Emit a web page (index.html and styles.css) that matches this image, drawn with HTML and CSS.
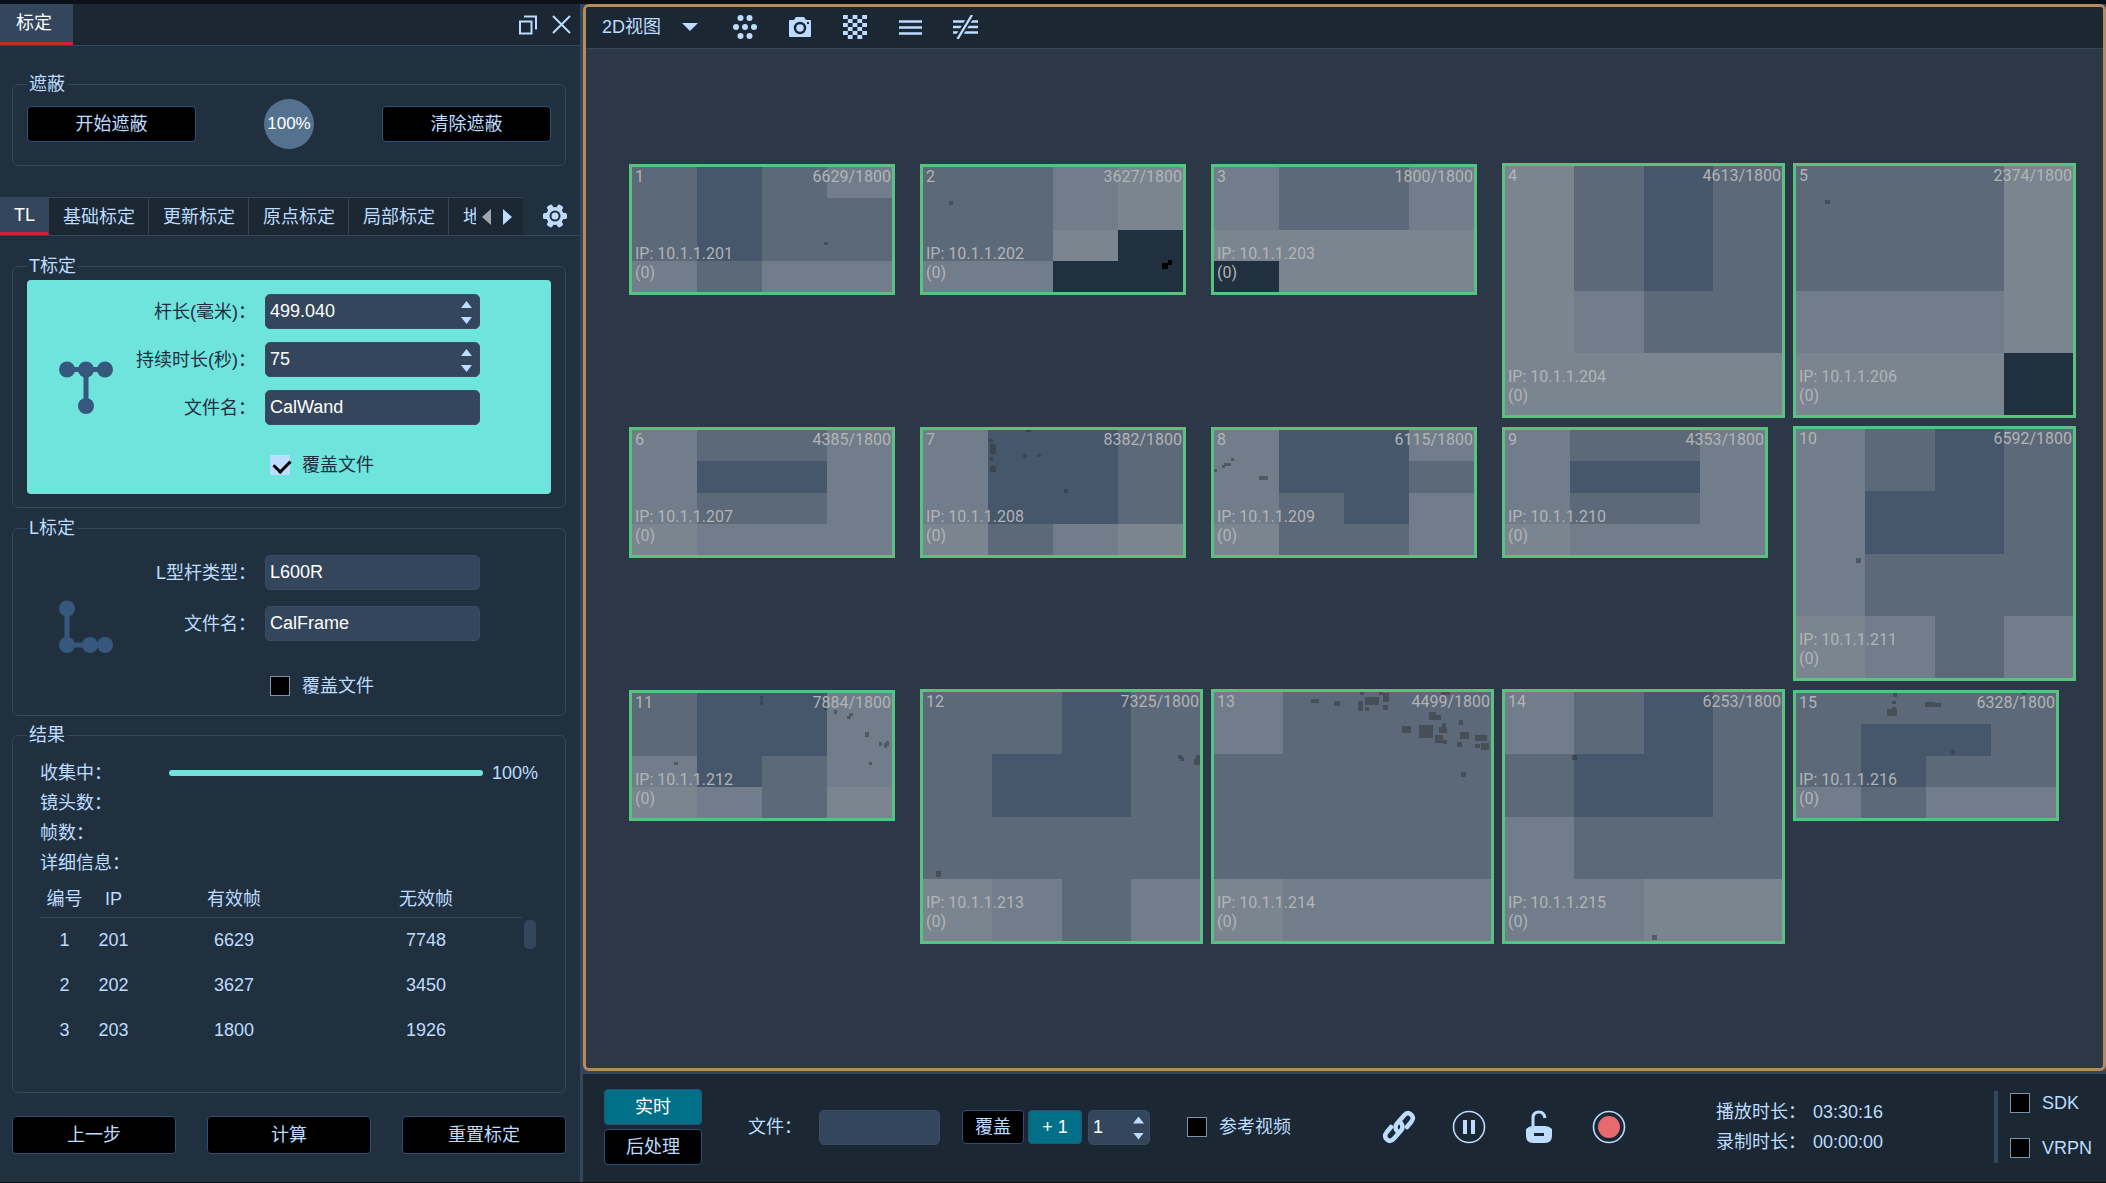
FILE: index.html
```html
<!DOCTYPE html>
<html lang="zh-CN">
<head>
<meta charset="utf-8">
<title>标定</title>
<link rel="stylesheet" href="styles.css">
</head>
<body>
<div class="app">
  <aside class="panel">
    <header class="panel-head">
      <h1 class="panel-title">标定</h1>
      <div class="window-tools">
        <button class="icon-btn" aria-label="浮动"><svg width="18" height="20" viewBox="0 0 18 20"><path d="M1 6.500h11.500v12H1z" fill="none" stroke="#bddcff" stroke-width="2"/><path d="M5 1.500h12v13" fill="none" stroke="#bddcff" stroke-width="2"/></svg></button>
        <button class="icon-btn" aria-label="关闭"><svg width="19" height="19" viewBox="0 0 19 19"><path d="M1 1l17 17M18 1L1 18" stroke="#bddcff" stroke-width="2"/></svg></button>
      </div>
    </header>

    <fieldset class="group mask-group">
      <legend>遮蔽</legend>
      <div class="mask-row">
        <button class="btn mask-btn">开始遮蔽</button>
        <span class="mask-progress">100%</span>
        <button class="btn mask-btn">清除遮蔽</button>
      </div>
    </fieldset>

    <nav class="tabs">
      <div class="tab-list">
        <button class="tab tab-active">TL</button>
        <button class="tab">基础标定</button>
        <button class="tab">更新标定</button>
        <button class="tab">原点标定</button>
        <button class="tab">局部标定</button>
        <button class="tab tab-cut">地</button>
        <button class="tab-scroll" aria-label="向左"><svg width="9" height="16" viewBox="0 0 9 16"><path d="M9 0v16L0 8z" fill="#a3a6aa"/></svg></button>
        <button class="tab-scroll" aria-label="向右"><svg width="9" height="16" viewBox="0 0 9 16"><path d="M0 0v16l9-8z" fill="#bddcff"/></svg></button>
      </div>
      <button class="icon-btn gear" aria-label="设置"><svg width="24" height="24" viewBox="0 0 24 24"><g fill="#bddcff"><circle cx="12" cy="12" r="9"/><rect x="9" y="0" width="6" height="24" rx="1.500" transform="rotate(30 12 12)"/><rect x="9" y="0" width="6" height="24" rx="1.500" transform="rotate(90 12 12)"/><rect x="9" y="0" width="6" height="24" rx="1.500" transform="rotate(150 12 12)"/></g><circle cx="12" cy="12" r="5.500" fill="#21303f"/><circle cx="12" cy="12" r="3.500" fill="#bddcff"/></svg></button>
    </nav>

    <fieldset class="group">
      <legend>T标定</legend>
      <div class="form form-active">
        <svg class="wand" width="54" height="54" viewBox="0 0 54 54" fill="#35587c"><path d="M8 6h38v5H8zM24.500 8h5v38h-5z"/><circle cx="8" cy="8.500" r="8"/><circle cx="27" cy="8.500" r="8"/><circle cx="46" cy="8.500" r="8"/><circle cx="27" cy="45" r="8"/></svg>
        <div class="fields">
          <label class="lbl" for="wand-len">杆长(毫米)：</label>
          <div class="spin"><input class="field" id="wand-len" type="number" step="0.001" value="499.040"><span class="steps"><button class="step up" aria-label="增加"></button><button class="step down" aria-label="减少"></button></span></div>
          <label class="lbl" for="wand-time">持续时长(秒)：</label>
          <div class="spin"><input class="field" id="wand-time" type="number" value="75"><span class="steps"><button class="step up" aria-label="增加"></button><button class="step down" aria-label="减少"></button></span></div>
          <label class="lbl" for="wand-file">文件名：</label>
          <input class="field" id="wand-file" type="text" value="CalWand">
          <label class="check over"><input type="checkbox" checked>覆盖文件</label>
        </div>
      </div>
    </fieldset>

    <fieldset class="group">
      <legend>L标定</legend>
      <div class="form form-frame">
        <svg class="wand" width="54" height="54" viewBox="0 0 54 54" fill="#35587c"><path d="M5.500 8h5v38h-5zM8 42.500h38v5H8z"/><circle cx="8" cy="8.500" r="8"/><circle cx="8" cy="45" r="8"/><circle cx="31" cy="45" r="8"/><circle cx="46" cy="45" r="8"/></svg>
        <div class="fields">
          <label class="lbl" for="frame-type">L型杆类型：</label>
          <input class="field" id="frame-type" type="text" value="L600R">
          <label class="lbl" for="frame-file">文件名：</label>
          <input class="field" id="frame-file" type="text" value="CalFrame">
          <label class="check over"><input type="checkbox">覆盖文件</label>
        </div>
      </div>
    </fieldset>

    <fieldset class="group result">
      <legend>结果</legend>
      <div class="info"><span class="info-name">收集中：</span><span class="bar"><span class="bar-fill" style="width:100%"></span></span><span>100%</span></div>
      <div class="info">镜头数：</div>
      <div class="info">帧数：</div>
      <div class="info">详细信息：</div>
      <div class="table-wrap">
        <table>
          <colgroup><col class="col-s"><col class="col-s"><col><col></colgroup>
          <thead><tr><th>编号</th><th>IP</th><th>有效帧</th><th>无效帧</th></tr></thead>
          <tbody>
            <tr><td>1</td><td>201</td><td>6629</td><td>7748</td></tr>
            <tr><td>2</td><td>202</td><td>3627</td><td>3450</td></tr>
            <tr><td>3</td><td>203</td><td>1800</td><td>1926</td></tr>
          </tbody>
        </table>
        <span class="scroll-thumb"></span>
      </div>
    </fieldset>

    <footer class="actions">
      <button class="btn">上一步</button>
      <button class="btn">计算</button>
      <button class="btn">重置标定</button>
    </footer>
  </aside>

  <main class="main">
    <section class="view">
      <div class="toolbar">
        <button class="view-select">2D视图<svg width="16" height="8" viewBox="0 0 16 8"><path d="M0 0h16L8 8z" fill="#bddcff"/></svg></button>
        <button class="icon-btn" aria-label="点"><svg width="24" height="24" viewBox="0 0 24 24" fill="#bddcff"><circle cx="7.500" cy="3" r="3"/><circle cx="16.500" cy="3" r="3"/><circle cx="3" cy="12" r="3"/><circle cx="12" cy="12" r="3"/><circle cx="21" cy="12" r="3"/><circle cx="7.500" cy="21" r="3"/><circle cx="16.500" cy="21" r="3"/></svg></button>
        <button class="icon-btn" aria-label="相机"><svg width="24" height="24" viewBox="0 0 24 24"><path d="M2 5h4l2-3h8l2 3h4q1 0 1 1v15q0 1-1 1H2q-1 0-1-1V6q0-1 1-1z" fill="#bddcff"/><circle cx="12" cy="13" r="5" fill="none" stroke="#1b2733" stroke-width="2.500"/><circle cx="20" cy="8" r="1.200" fill="#1b2733"/></svg></button>
        <button class="icon-btn" aria-label="棋盘"><svg width="24" height="24" viewBox="0 0 25 25"><path d="M2.500 0v25M12.500 0v25M22.500 0v25" stroke="#bddcff" stroke-width="5" stroke-dasharray="4.170 4.170"/><path d="M7.500 4.170v21M17.500 4.170v21" stroke="#bddcff" stroke-width="5" stroke-dasharray="4.170 4.170"/></svg></button>
        <button class="icon-btn" aria-label="线"><svg width="24" height="24" viewBox="0 0 24 24"><path d="M1 6.500h23M1 12.500h23M1 18.500h23" stroke="#bddcff" stroke-width="2.600"/></svg></button>
        <button class="icon-btn" aria-label="隐藏线"><svg width="25" height="24" viewBox="0 0 25 24"><path d="M0 6.500h25M0 12h25M0 17.500h25" stroke="#bddcff" stroke-width="2.600"/><path d="M4 24L19 0" stroke="#1b2733" stroke-width="6"/><path d="M4.500 24L19 0" stroke="#bddcff" stroke-width="2.400"/></svg></button>
      </div>

      <div class="cameras">
        <article class="cam">
          <svg class="heat" viewBox="0 0 260 125" preserveAspectRatio="none"><g transform="scale(65 31.250)"><path class="c" d="M0 0h4v4H0z"/><path class="d" d="M1 0h1v3H1z"/><path class="b" d="M3 0h1v1H3zM0 3h1v1H0zM2 3h2v1H2z"/></g><path class="speck" d="M192 75h4v3h-4z"/></svg>
          <div class="cam-top"><span>1</span><span>6629/1800</span></div><div class="cam-bottom">IP: 10.1.1.201<br>(0)</div>
        </article>
        <article class="cam">
          <svg class="heat" viewBox="0 0 260 125" preserveAspectRatio="none"><g transform="scale(65 31.250)"><path class="c" d="M0 0h4v4H0z"/><path class="b" d="M2 0h1v2H2zM0 3h2v1H0z"/><path class="a" d="M3 0h1v2H3zM2 2h1v1H2z"/><path class="e" d="M3 2h1v2H2V3h1z"/></g><path class="speck" d="M26 34h4v4h-4z"/><path d="M239 96h6v6h-6zM245 93h4v5h-4z"/></svg>
          <div class="cam-top"><span>2</span><span>3627/1800</span></div><div class="cam-bottom">IP: 10.1.1.202<br>(0)</div>
        </article>
        <article class="cam">
          <svg class="heat" viewBox="0 0 260 125" preserveAspectRatio="none"><g transform="scale(65 31.250)"><path class="a" d="M0 0h4v4H0z"/><path class="b" d="M0 0h4v2H0z"/><path class="c" d="M1 0h2v2H1z"/><path class="e" d="M0 3h1v1H0z"/></g></svg>
          <div class="cam-top"><span>3</span><span>1800/1800</span></div><div class="cam-bottom">IP: 10.1.1.203<br>(0)</div>
        </article>
        <article class="cam cam-tall">
          <svg class="heat" viewBox="0 0 277 249" preserveAspectRatio="none"><g transform="scale(69.250 62.250)"><path class="a" d="M0 0h4v4H0z"/><path class="c" d="M1 0h3v3H2V2H1z"/><path class="b" d="M1 2h1v1H1z"/><path class="d" d="M2 0h1v2H2z"/></g></svg>
          <div class="cam-top"><span>4</span><span>4613/1800</span></div><div class="cam-bottom">IP: 10.1.1.204<br>(0)</div>
        </article>
        <article class="cam cam-tall">
          <svg class="heat" viewBox="0 0 277 249" preserveAspectRatio="none"><g transform="scale(69.250 62.250)"><path class="a" d="M0 0h4v4H0z"/><path class="c" d="M0 0h3v2H0z"/><path class="b" d="M0 2h3v1H0z"/><path class="e" d="M3 3h1v1H3z"/></g><path class="speck" d="M29 34h5v4h-5z"/></svg>
          <div class="cam-top"><span>5</span><span>2374/1800</span></div><div class="cam-bottom">IP: 10.1.1.206<br>(0)</div>
        </article>

        <article class="cam">
          <svg class="heat" viewBox="0 0 260 125" preserveAspectRatio="none"><g transform="scale(65 31.250)"><path class="b" d="M0 0h4v4H0z"/><path class="c" d="M1 0h2v3H1z"/><path class="d" d="M1 1h2v1H1z"/><path class="a" d="M0 3h1v1H0z"/></g></svg>
          <div class="cam-top"><span>6</span><span>4385/1800</span></div><div class="cam-bottom">IP: 10.1.1.207<br>(0)</div>
        </article>
        <article class="cam">
          <svg class="heat" viewBox="0 0 260 125" preserveAspectRatio="none"><g transform="scale(65 31.250)"><path class="b" d="M0 0h4v4H0z"/><path class="d" d="M1 0h2v3H1z"/><path class="c" d="M3 0h1v3H3zM1 3h1v1H1z"/><path class="a" d="M0 3h1v1H0zM3 3h1v1H3z"/></g><path class="speck" d="M103 0h5v2h-5zM66 9h4v3h-4zM67 14h6v10h-6zM67 27h3v4h-3zM67 36h6v6h-6zM100 24h4v4h-4zM114 24h4v3h-4zM141 59h4v4h-4z"/></svg>
          <div class="cam-top"><span>7</span><span>8382/1800</span></div><div class="cam-bottom">IP: 10.1.1.208<br>(0)</div>
        </article>
        <article class="cam">
          <svg class="heat" viewBox="0 0 260 125" preserveAspectRatio="none"><g transform="scale(65 31.250)"><path class="b" d="M0 0h4v4H0z"/><path class="c" d="M3 1h1v1H3zM1 2h2v2H1z"/><path class="d" d="M1 0h2v3H2V2H1z"/><path class="a" d="M0 3h1v1H0z"/></g><path class="speck" d="M0 39h3v3H0zM8 35h3v3H8zM10 33h7v3h-7zM17 28h3v3h-3zM45 46h9v4h-9z"/></svg>
          <div class="cam-top"><span>8</span><span>6115/1800</span></div><div class="cam-bottom">IP: 10.1.1.209<br>(0)</div>
        </article>
        <article class="cam">
          <svg class="heat" viewBox="0 0 260 125" preserveAspectRatio="none"><g transform="scale(65 31.250)"><path class="b" d="M0 0h4v4H0z"/><path class="c" d="M1 0h2v3H1z"/><path class="d" d="M1 1h2v1H1z"/><path class="a" d="M0 3h1v1H0z"/></g></svg>
          <div class="cam-top"><span>9</span><span>4353/1800</span></div><div class="cam-bottom">IP: 10.1.1.210<br>(0)</div>
        </article>
        <article class="cam cam-tall">
          <svg class="heat" viewBox="0 0 277 249" preserveAspectRatio="none"><g transform="scale(69.250 62.250)"><path class="c" d="M0 0h4v4H0z"/><path class="b" d="M0 0h1v3h1v1H0zM3 3h1v1H3z"/><path class="d" d="M2 0h1v2H1V1h1z"/><path class="a" d="M0 3h1v1H0z"/></g><path class="speck" d="M60 129h5v5h-5z"/></svg>
          <div class="cam-top"><span>10</span><span>6592/1800</span></div><div class="cam-bottom">IP: 10.1.1.211<br>(0)</div>
        </article>

        <article class="cam">
          <svg class="heat" viewBox="0 0 260 125" preserveAspectRatio="none"><g transform="scale(65 31.250)"><path class="c" d="M0 0h4v4H0z"/><path class="d" d="M1 0h2v2H2v1H1z"/><path class="b" d="M3 0h1v3H3zM0 2h1v1h1v1H1V3H0z"/><path class="a" d="M0 3h1v1H0zM3 3h1v1H3z"/></g><path class="speck" d="M128 3h3v3h-3zM128 7h3v5h-3zM192 14h3v3h-3zM202 17h3v4h-3zM217 20h4v3h-4zM215 23h4v3h-4zM233 39h4v5h-4zM247 49h3v4h-3zM252 50h3v5h-3zM254 48h3v5h-3zM42 69h4v3h-4zM237 69h3v3h-3z"/></svg>
          <div class="cam-top"><span>11</span><span>7884/1800</span></div><div class="cam-bottom">IP: 10.1.1.212<br>(0)</div>
        </article>
        <article class="cam cam-tall">
          <svg class="heat" viewBox="0 0 277 249" preserveAspectRatio="none"><g transform="scale(69.250 62.250)"><path class="c" d="M0 0h4v4H0z"/><path class="d" d="M2 0h1v2H1V1h1z"/><path class="b" d="M1 3h1v1H1zM3 3h1v1H3z"/><path class="a" d="M0 3h1v1H0z"/></g><path class="speck" d="M255 63h4v4h-4zM257 65h4v4h-4zM273 63h4v10h-6v-6h2zM13 179h5v6h-5z"/></svg>
          <div class="cam-top"><span>12</span><span>7325/1800</span></div><div class="cam-bottom">IP: 10.1.1.213<br>(0)</div>
        </article>
        <article class="cam cam-tall">
          <svg class="heat" viewBox="0 0 277 249" preserveAspectRatio="none"><g transform="scale(69.250 62.250)"><path class="c" d="M0 0h4v4H0z"/><path class="b" d="M0 0h1v1H0zM1 3h3v1H1z"/><path class="a" d="M0 3h1v1H0z"/></g><path class="speck" d="M97 7h8v4h-8zM120 9h6v5h-6zM144 9h5v10h-5zM151 5h14v8h-14zM169 1h6v9h-6zM165 0h4v3h-4zM146 0h4v3h-4zM151 15h4v4h-4zM169 13h5v5h-5zM227 0h9v3h-9zM215 20h7v8h-7zM222 23h5v5h-5zM245 28h4v5h-4zM188 34h9v7h-9zM205 33h14v13h-14zM225 35h8v6h-8zM228 31h4v4h-4zM221 43h8v8h-8zM229 48h4v4h-4zM246 40h9v7h-9zM261 43h12v6h-12zM243 50h5v5h-5zM261 52h5v4h-5zM267 51h8v7h-8zM247 80h5v5h-5z"/></svg>
          <div class="cam-top"><span>13</span><span>4499/1800</span></div><div class="cam-bottom">IP: 10.1.1.214<br>(0)</div>
        </article>
        <article class="cam cam-tall">
          <svg class="heat" viewBox="0 0 277 249" preserveAspectRatio="none"><g transform="scale(69.250 62.250)"><path class="c" d="M0 0h4v4H0z"/><path class="b" d="M0 0h1v1H0zM0 2h1v1h1v1H0z"/><path class="d" d="M2 0h1v2H1V1h1z"/><path class="a" d="M2 3h2v1H2z"/></g><path class="speck" d="M67 63h5v5h-5zM147 243h5v5h-5z"/></svg>
          <div class="cam-top"><span>14</span><span>6253/1800</span></div><div class="cam-bottom">IP: 10.1.1.215<br>(0)</div>
        </article>
        <article class="cam">
          <svg class="heat" viewBox="0 0 260 125" preserveAspectRatio="none"><g transform="scale(65 31.250)"><path class="c" d="M0 0h4v4H0z"/><path class="d" d="M1 1h2v1H2v1H1z"/><path class="b" d="M0 3h1v1H0zM2 3h2v1H2z"/></g><path class="speck" d="M97 0h4v4h-4zM96 8h4v3h-4zM91 16h10v7H91zM96 14h4v2h-4zM129 9h10v5h-10zM139 10h6v4h-6zM226 0h4v2h-4zM155 57h4v4h-4z"/></svg>
          <div class="cam-top"><span>15</span><span>6328/1800</span></div><div class="cam-bottom">IP: 10.1.1.216<br>(0)</div>
        </article>
      </div>
    </section>

    <section class="transport">
      <div class="modes">
        <button class="btn mode mode-on">实时</button>
        <button class="btn mode">后处理</button>
      </div>
      <label class="file-label" for="file">文件：</label>
      <input class="field file-input" id="file" type="text">
      <div class="take">
        <button class="btn take-btn">覆盖</button>
        <button class="btn take-btn mode-on">+ 1</button>
      </div>
      <div class="spin take-spin"><input class="field" type="number" aria-label="编号" value="1"><span class="steps"><button class="step up" aria-label="增加"></button><button class="step down" aria-label="减少"></button></span></div>
      <label class="check ref"><input type="checkbox">参考视频</label>
      <div class="players">
        <button class="icon-btn" aria-label="链接"><svg width="34" height="34" viewBox="0 0 34 34"><g fill="none" stroke="#bddcff" stroke-width="4.500" stroke-linecap="round"><path d="M15 21q-3-4 0-7.500l7-8q3.500-4 7-1t.500 7l-4.500 5.500"/><path d="M19 13q3 4 0 7.500l-7 8q-3.500 4-7 1t-.500-7L9 17"/></g></svg></button>
        <button class="icon-btn" aria-label="暂停"><svg width="34" height="34" viewBox="0 0 34 34"><circle cx="17" cy="17" r="15.500" fill="none" stroke="#bddcff" stroke-width="1.600"/><path d="M11 10h4v14h-4zM19 10h4v14h-4z" fill="#bddcff"/></svg></button>
        <button class="icon-btn" aria-label="解锁"><svg width="34" height="34" viewBox="0 0 34 34"><path d="M11 18V8q0-6 6-6 5 0 6 6" fill="none" stroke="#bddcff" stroke-width="3"/><path d="M4 19q3-3 7-3h12q4 0 7 3v7q0 7-7 7H11q-7 0-7-7z" fill="#bddcff"/><path d="M12 23h10v3H12z" fill="#1b2733"/></svg></button>
        <button class="icon-btn" aria-label="录制"><svg width="34" height="34" viewBox="0 0 34 34"><circle cx="17" cy="17" r="15.500" fill="none" stroke="#bddcff" stroke-width="1.600"/><circle cx="17" cy="17" r="11" fill="#e66a70"/></svg></button>
      </div>
      <dl class="times">
        <dt>播放时长：</dt><dd>03:30:16</dd>
        <dt>录制时长：</dt><dd>00:00:00</dd>
      </dl>
      <div class="streams">
        <label class="check"><input type="checkbox">SDK</label>
        <label class="check"><input type="checkbox">VRPN</label>
      </div>
    </section>
  </main>
</div>
</body>
</html>
```
FILE: styles.css
```css
* { box-sizing: border-box; }

body {
  margin: 0;
  background: #0a1119;
  color: #bddcff;
  font: 18px/24px "Liberation Sans", "Noto Sans CJK SC", sans-serif;
}

button, input { font: inherit; color: inherit; }
button { padding: 0; border: 0; background: none; }

.app {
  display: flex;
  min-height: 100vh;
  padding: 4px 0 1px;
}

/* left panel */
.panel {
  display: flex;
  flex-direction: column;
  flex: 0 0 583px;
  background: #21303f;
  border-right: 3px solid #34465b;
}

.panel-head {
  display: flex;
  justify-content: space-between;
  height: 42px;
  background: #1b2733;
  border-bottom: 1px solid #34465b;
}

.panel-title {
  margin: 0;
  padding: 7px 21px 7px 16px;
  background: #34465b;
  border-bottom: 3px solid #c5282e;
  color: #fff;
  font-size: 18px;
  font-weight: 400;
  line-height: 24px;
}

.window-tools {
  display: flex;
  align-items: center;
  gap: 15px;
  padding-right: 9px;
}

.icon-btn { display: flex; align-items: center; justify-content: center; }

.group {
  min-width: 0;
  margin: 8px 14px 0 12px;
  padding: 2px 14px 13px;
  border: 1px solid #34465b;
  border-radius: 6px;
}
.group legend { padding: 0 2px; }
.mask-group { margin-top: 26px; padding: 3px 14px 16px; }

.mask-row { display: flex; align-items: center; justify-content: space-between; }
.mask-progress {
  width: 50px;
  height: 50px;
  border-radius: 50%;
  background: #54728f;
  color: #fff;
  font-size: 17px;
  line-height: 50px;
  text-align: center;
}

.btn {
  height: 38px;
  border: 1px solid #2e5078;
  border-radius: 4px;
  background: #000;
  text-align: center;
}
.mask-btn { width: 169px; height: 36px; }

.tabs {
  display: flex;
  justify-content: space-between;
  height: 39px;
  margin: 31px 0 10px;
  border-bottom: 1px solid #34465b;
}
.tab-list {
  display: flex;
  align-items: stretch;
  width: 523px;
  border-top: 1px solid #34465b;
  background: #1b2733;
}
.tab { flex: none; padding: 0 13px 0 14px; border-right: 1px solid #34465b; white-space: nowrap; }
.tab-active { background: #34465b; border-bottom: 3px solid #c5282e; color: #fff; }
.tab-cut { width: 27px; padding: 0 0 0 14px; border: 0; overflow: hidden; text-align: left; }
.tab-scroll { display: flex; align-items: center; justify-content: center; width: 21px; }
.gear { padding-right: 13px; }

.form { display: flex; align-items: center; }
.form-active {
  padding: 14px 0 17px;
  border-radius: 4px;
  background: #6ee4dd;
  color: #1d2e3f;
}
.form-active .wand { margin-top: 4px; }
.form-frame { padding-top: 13px; margin-bottom: 4px; }
.wand { flex: none; margin-left: 32px; }
.fields {
  display: grid;
  flex: 1;
  grid-template-columns: auto 215px;
  justify-content: end;
  align-items: center;
  gap: 13px 9px;
  padding-right: 71px;
}
.form-frame .fields { row-gap: 16px; }
.lbl { text-align: right; }
.over { grid-column: 2; margin-top: 15px; padding-left: 5px; }
.form-frame .over { margin-top: 17px; }

.field {
  width: 100%;
  height: 35px;
  padding: 0 4px;
  border: 1px solid #3a4d63;
  border-radius: 5px;
  background: #34465b;
  color: #fff;
  appearance: textfield;
}
.field::-webkit-inner-spin-button { appearance: none; }

.spin { position: relative; }
.steps {
  position: absolute;
  top: 7px;
  right: 8px;
  display: grid;
  gap: 9px;
}
.step { width: 11px; height: 7px; background: #bddcff; }
.up { clip-path: polygon(50% 0, 100% 100%, 0 100%); }
.down { clip-path: polygon(0 0, 100% 0, 50% 100%); }

.check { display: flex; align-items: center; gap: 12px; }
.check input {
  flex: none;
  width: 20px;
  height: 20px;
  margin: 0;
  border: 1px solid #7d93ac;
  background: #000;
  appearance: none;
}
.check input:checked { border-color: #bddcff; background: #bddcff; }
.check input:checked::after {
  content: "";
  display: block;
  width: 13px;
  height: 8px;
  margin: 3px 0 0 3px;
  border: solid #000;
  border-width: 0 0 3px 3px;
  transform: rotate(-45deg);
}

.result {
  display: flex;
  flex: 1;
  flex-direction: column;
  margin-top: 7px;
  padding: 11px 27px 0;
}
.result legend { margin-left: -13px; }
.info { display: flex; align-items: center; height: 30px; }
.info-name { width: 129px; }
.bar { flex: 1; height: 6px; margin-right: 9px; border-radius: 3px; background: #34465b; }
.bar-fill { display: block; height: 6px; border-radius: 3px; background: #6ee4dd; }

.table-wrap { display: flex; gap: 2px; margin: 4px 2px 0 0; }
table { flex: 1; border-collapse: collapse; table-layout: fixed; text-align: center; }
.col-s { width: 49px; }
th { height: 35px; padding: 0; border-bottom: 1px solid #34465b; font-weight: 400; }
td { height: 45px; padding: 0; }
.scroll-thumb { width: 12px; height: 29px; margin-top: 38px; border-radius: 5px; background: #34465b; }

.actions {
  display: grid;
  grid-template-columns: repeat(3, 1fr);
  gap: 31px;
  margin: 23px 14px 28px 12px;
}

/* right side */
.main { display: flex; flex: 1; flex-direction: column; min-width: 0; background: #34465b; }

.view {
  flex: 1;
  border: 3px solid #b88a5b;
  border-radius: 6px;
  background: #2c3848;
  overflow: hidden;
}

.toolbar {
  display: flex;
  align-items: center;
  gap: 31px;
  height: 42px;
  padding: 0 0 1px 16px;
  border-bottom: 1px solid #34465b;
  background: #1b2733;
}
.view-select { display: flex; align-items: center; gap: 21px; margin-right: 4px; }

.cameras {
  display: grid;
  grid-template-columns: repeat(5, 1fr);
  row-gap: 8px;
  padding: 114px 19px 0 43px;
}

.cam {
  position: relative;
  display: flex;
  flex-direction: column;
  justify-content: space-between;
  align-self: start;
  width: calc(100% - 25px);
  aspect-ratio: 266 / 131;
  margin-top: 1px;
  border: 3px solid #5ac281;
  color: #b2b4b6;
  font: 16px/19px Roboto, "Liberation Sans", sans-serif;
}
.cam-tall { width: calc(100% - 8px); aspect-ratio: 283 / 255; margin-top: 0; }

.heat { position: absolute; inset: 0; width: 100%; height: 100%; shape-rendering: crispEdges; }
.a { fill: #7b8590; }
.b { fill: #717d8a; }
.c { fill: #5c6979; }
.d { fill: #46566b; }
.e { fill: #20303f; }
.speck { fill: #303438; fill-opacity: .5; }

.cam-top, .cam-bottom { position: relative; padding: 0 1px 0 3px; }
.cam-top { display: flex; justify-content: space-between; }
.cam-bottom { padding-bottom: 10px; }

.transport {
  display: flex;
  align-items: center;
  height: 108px;
  margin-top: 3px;
  padding: 0 9px 2px 21px;
  background: #1b2733;
  white-space: nowrap;
}
.modes { display: grid; gap: 4px; }
.mode { width: 98px; height: 36px; }
.mode-on { background: #007089; color: #fff; }
.file-label { margin-left: 46px; }
.file-input { width: 121px; margin-left: 17px; }
.take { display: flex; gap: 4px; margin: 0 6px 0 22px; }
.take-btn { width: 62px; height: 34px; }
.take-btn.mode-on { width: 54px; }
.take-spin { width: 62px; }
.take-spin .steps { right: 6px; }
.ref { margin-left: 37px; }
.players { display: flex; gap: 36px; margin-left: 91px; }
.times {
  display: grid;
  grid-template-columns: auto auto;
  gap: 6px 7px;
  margin: 0 0 0 auto;
}
.times dd { margin: 0; }
.streams {
  display: grid;
  gap: 21px;
  width: 103px;
  margin-left: 111px;
  padding: 0 0 3px 12px;
  border-left: 4px solid #34465b;
}
```
